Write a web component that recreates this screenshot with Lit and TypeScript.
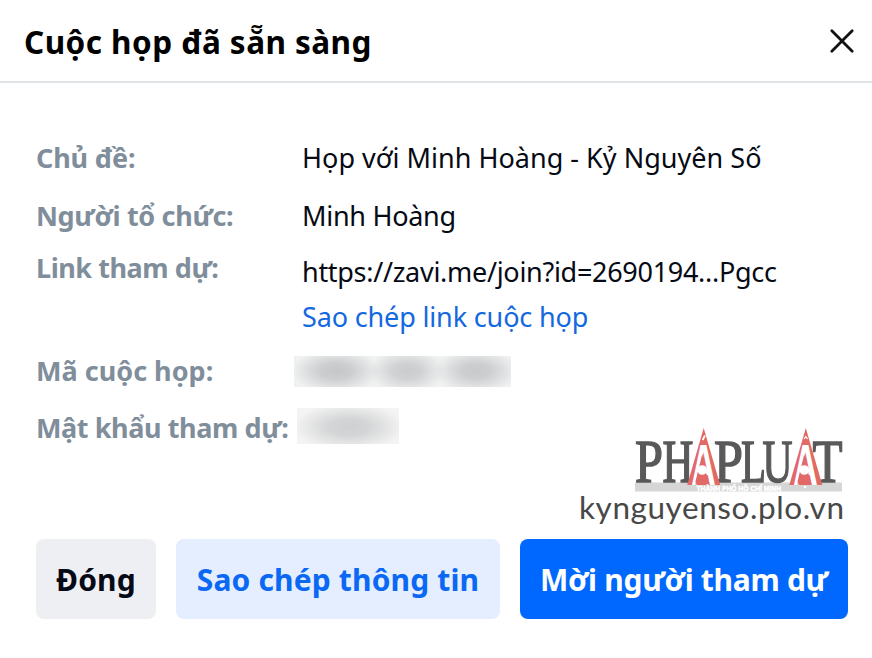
import { LitElement, html, svg, css } from "lit";
import { customElement } from "lit/decorators.js";

@customElement("publisher-mark")
class PublisherMark extends LitElement {
  static styles = css`
    :host { display: block; }
    svg { display: block; overflow: hidden; }
    .serif { font-family: "Liberation Serif", serif; font-size: 61px; fill: #595959; stroke: #595959; stroke-width: 1.5px; }
    .peak { fill: #e26a66; }
    .inner { font-family: "Liberation Sans", sans-serif; font-weight: 700; font-size: 57px; fill: #fff; }
    .city { font-family: "Liberation Sans", sans-serif; font-weight: 700; font-size: 7.8px; fill: #fff; stroke: #fff; stroke-width: 0.5px; }
    .site { font-family: Lato, sans-serif; font-size: 31.5px; fill: #484848; }
  `;

  private letter(ch: string, x: number, width: number) {
    return svg`<text class="serif" x=${x} y="58" textLength=${width} lengthAdjust="spacingAndGlyphs">${ch}</text>`;
  }

  private peak(x: number) {
    return svg`<g transform="translate(${x} 0)">
      <path class="peak" d="M0 4 L16.5 61 H-16.5 Z" />
      <text class="inner" x="-12.5" y="61" textLength="24.5" lengthAdjust="spacingAndGlyphs">A</text>
      <path class="peak" d="M-1.5 30 L4.5 58.5 H-8.5 Z" />
      <circle cx="-1.5" cy="46" r="4.8" fill="#fff" />
      <path class="peak" d="M-5.5 54 Q-1.5 51 2.5 54 L5 60.5 H-8.5 Z" />
    </g>`;
  }

  render() {
    return html`<svg width="270" height="102" viewBox="0 0 270 102" role="img">
      <rect x="59" y="58.5" width="207" height="9" fill="#d6d6d6" />
      ${this.letter("P", 59, 28)} ${this.letter("H", 86.5, 31)}
      ${this.letter("P", 138, 29)} ${this.letter("L", 165, 25)}
      ${this.letter("U", 186.5, 30)} ${this.letter("T", 236.5, 30)}
      ${this.peak(127.7)} ${this.peak(229.8)}
      <path d="M126.6 16 L129 11.5" stroke="#fff" stroke-width="1.8" fill="none" />
      <path d="M228 15 L229.8 12.6 L231.6 15" stroke="#fff" stroke-width="1.2" fill="none" />
      <circle cx="229" cy="63" r="1.3" fill="#fff" />
      <text class="city" x="120.5" y="66.6" textLength="84.5" lengthAdjust="spacingAndGlyphs">THÀNH PHỐ HỒ CHÍ MINH</text>
      <text class="site" x="3" y="95" textLength="265">kynguyenso.plo.vn</text>
    </svg>`;
  }
}

@customElement("app-root")
class AppRoot extends LitElement {
  static styles = css`
    :host {
      display: flex; flex-direction: column; position: relative;
      height: 658px; box-sizing: border-box; overflow: hidden;
      background: #fff; color: #060a14;
      font-family: "Noto Sans", sans-serif; font-size: 27px; line-height: 40px;
      white-space: nowrap;
    }
    header {
      display: flex; align-items: center; justify-content: space-between;
      height: 83px; box-sizing: border-box; padding: 2px 17px 0 24px;
      border-bottom: 2px solid #e1e4e7;
    }
    h1 { margin: 0; font-size: 31.5px; font-weight: 700; letter-spacing: 0.45px; color: #000; }
    .close { display: flex; padding: 0; margin-bottom: 2px; border: 0; background: none; }
    dl { margin: 0; padding: 55px 0 0 36px; height: 401px; }
    .row { display: grid; grid-template-columns: 266px 1fr; align-items: start; }
    .organizer { margin-top: 18px; }
    .link { margin-top: 12px; }
    .link dd { padding-top: 4px; }
    .code { margin-top: 14px; }
    .password { margin-top: 17px; }
    dt { font-weight: 700; color: #808e9b; }
    dd { margin: 0; }
    .topic dt { letter-spacing: -0.15px; }
    .topic dd { letter-spacing: 0.02px; }
    .organizer dt { letter-spacing: -0.33px; }
    .organizer dd { letter-spacing: -0.28px; }
    .link dt { letter-spacing: -0.45px; }
    .link dd { letter-spacing: -0.29px; }
    .code dt { letter-spacing: 0.02px; }
    .password dt { letter-spacing: -0.4px; }
    .link .copy { display: block; margin-top: 5px; letter-spacing: -0.15px; color: #1468e0; text-decoration: none; }
    .masked { height: 31px; width: 217px; margin: 5px 0 0 -8px;
      background:
        radial-gradient(ellipse 44px 22px at 42px 15px, #c6c7c9 0, #cccdcf 35%, transparent 100%),
        radial-gradient(ellipse 38px 22px at 113px 15px, #cbccce 0, #d0d1d2 35%, transparent 100%),
        radial-gradient(ellipse 42px 22px at 182px 15px, #c8c9cb 0, #cecfd1 35%, transparent 100%),
        #f0f1f1;
    }
    .masked.short { width: 102px; height: 36px; margin: 0 0 0 -5px;
      background: radial-gradient(ellipse 56px 24px at 52px 19px, #cfd0d1 0, #d4d5d6 35%, transparent 100%), #f4f4f4;
    }
    footer { display: grid; grid-template-columns: 120px 324px 328px; gap: 20px; padding-left: 36px; }
    button { font: inherit; }
    .action { height: 80px; padding: 2px 0 0; border: 0; border-radius: 8px; font-size: 30px; font-weight: 700; }
    .dismiss { background: #eeeff3; color: #060a16; letter-spacing: 0.2px; }
    .secondary { background: #e5eeff; color: #0a68f5; letter-spacing: 0.15px; }
    .primary { background: #0068ff; color: #fff; letter-spacing: -0.3px; }
    publisher-mark { position: absolute; left: 576px; top: 424px; }
  `;

  render() {
    return html`
      <header>
        <h1>Cuộc họp đã sẵn sàng</h1>
        <button class="close" aria-label="Đóng">
          <svg width="26" height="26" viewBox="0 0 26 26" fill="none" stroke="#101214" stroke-width="2.8" stroke-linecap="round">
            <path d="M2.8 2.8 L23.2 23.2 M23.2 2.8 L2.8 23.2" />
          </svg>
        </button>
      </header>
      <dl>
        <div class="row topic"><dt>Chủ đề:</dt><dd>Họp với Minh Hoàng - Kỷ Nguyên Số</dd></div>
        <div class="row organizer"><dt>Người tổ chức:</dt><dd>Minh Hoàng</dd></div>
        <div class="row link">
          <dt>Link tham dự:</dt>
          <dd>https://zavi.me/join?id=2690194...Pgcc<a class="copy">Sao chép link cuộc họp</a></dd>
        </div>
        <div class="row code"><dt>Mã cuộc họp:</dt><dd class="masked"></dd></div>
        <div class="row password"><dt>Mật khẩu tham dự:</dt><dd class="masked short"></dd></div>
      </dl>
      <footer>
        <button class="action dismiss">Đóng</button>
        <button class="action secondary">Sao chép thông tin</button>
        <button class="action primary">Mời người tham dự</button>
      </footer>
      <publisher-mark></publisher-mark>
    `;
  }
}
